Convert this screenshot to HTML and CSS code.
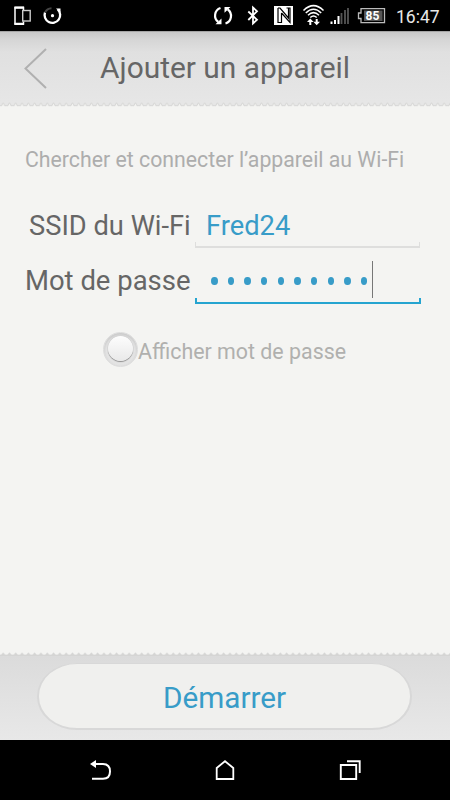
FILE: index.html
```html
<!DOCTYPE html>
<html lang="fr">
<head>
<meta charset="utf-8">
<title>Ajouter un appareil</title>
<link rel="stylesheet" href="styles.css">
</head>
<body>
<div class="status">
  <svg class="status-icons" width="390" height="31" viewBox="0 0 390 31" fill="none" stroke="#fff">
    <path d="M23.500 10V7.500H15V24H23.500V21.500" stroke-width="1.500"/>
    <path d="M14.500 7.700H24M14.500 23.800H24" stroke-width="2.200"/>
    <rect x="22.700" y="10.500" width="7.500" height="10.500" stroke="#ccc" stroke-width="1.400"/>
    <path d="M57.800 9.500A7.800 7.800 0 1 1 45 12.500" stroke-width="2.300"/>
    <path d="M45 12.500A7.800 7.800 0 0 1 51.500 8.200" stroke="#444" stroke-width="2"/>
    <path d="M56 8.500H60.500V13Z" fill="#fff" stroke="none"/>
    <circle cx="52.500" cy="15.700" r="1.600" fill="#fff" stroke="none"/>
    <path d="M220.500 8A8 8 0 0 0 218.300 22M225.500 23.500A8 8 0 0 0 227.800 9.500" stroke-width="2.200"/>
    <path d="M215.500 24.300H221.500V18.500ZM230.500 7H224.500V12.800Z" fill="#fff" stroke="none"/>
    <path d="M248.300 11.500L257 19.800L253 23.500V7.500L257 11.300L248.300 20" stroke-width="1.800"/>
    <rect x="274" y="6" width="19" height="19" fill="#fff" stroke="none"/>
    <path d="M278 8V22.500H281.500V13M278 8H280L288.500 18V8M281.500 13L290 22.500V8H286.500" stroke="#000" stroke-width="1.200"/>
    <path d="M303.500 10.500Q313.500 .8 323.500 10.500M305.800 13Q313.500 5.500 321.200 13M308 15.300Q313.500 10 319 15.300M310.300 17.500Q313.500 14.500 316.700 17.500" stroke-width="1.500"/>
    <path d="M310.300 25V21M316.700 19V22" stroke-width="2"/>
    <path d="M307 22L310.300 18.500L313.600 22ZM313.400 21.800L316.700 25.300L320 21.800Z" fill="#fff" stroke="none"/>
    <path d="M331.500 24V21.500M335 24V20M338.500 24V16" stroke-width="2"/>
    <path d="M341.500 24V13M345 24V10M348 24V8" stroke="#555" stroke-width="1.800"/>
    <path d="M361 8.700H384.500V22.700H361V18.500H358.500V13H361Z" stroke="#bbb" stroke-width="1.300"/>
    <rect x="364" y="10.500" width="18.500" height="10.500" fill="#555" stroke="none"/>
    <text class="battery" x="372.500" y="20">85</text>
  </svg>
  <span class="clock">16:47</span>
</div>
<header class="header">
  <svg class="back" width="24" height="42" viewBox="0 0 24 42" fill="none" stroke="#b0b0b0" stroke-width="2"><path d="M22 1L1.500 20.500L22 40"/></svg>
  <h1 class="title">Ajouter un appareil</h1>
</header>
<svg class="edge" width="450" height="5"><defs><pattern id="top-wave" width="6.300" height="5" patternUnits="userSpaceOnUse"><path d="M0 0H6.300V3.300Q4.700 4.800 4.100 2.300Q3.150 -.3 2.200 2.300Q1.600 4.800 0 3.300Z" fill="#e6e6e6"/><path d="M0 3.500Q1.600 4.600 2.200 2.300Q3.150 -.3 4.100 2.300Q4.700 4.600 6.300 3.500" fill="none" stroke="#d6d6d5"/></pattern></defs><rect width="450" height="5" fill="url(#top-wave)"/></svg>
<main class="content">
  <p class="intro"><span class="fit fit-intro">Chercher et connecter l’appareil au Wi-Fi</span></p>
  <div class="form">
    <div class="row">
      <label class="label"><span class="fit fit-ssid">SSID du Wi-Fi</span></label>
      <div class="field"><span class="fit fit-value">Fred24</span></div>
    </div>
    <div class="row row-password">
      <label class="label"><span class="fit fit-pass">Mot de passe</span></label>
      <div class="field active"><span class="dots"><i></i><i></i><i></i><i></i><i></i><i></i><i></i><i></i><i></i><i></i></span><span class="caret"></span></div>
    </div>
  </div>
  <div class="show"><span class="radio"><span class="knob"></span></span><span class="fit fit-show">Afficher mot de passe</span></div>
</main>
<svg class="edge" width="450" height="4"><defs><pattern id="bottom-wave" width="6.300" height="4" patternUnits="userSpaceOnUse"><path d="M0 2.500Q1.600 3 2.200 1.500Q3.150 -.5 4.100 1.500Q4.700 3 6.300 2.500V4H0Z" fill="#d5d5d4"/></pattern></defs><rect width="450" height="4" fill="url(#bottom-wave)"/></svg>
<footer class="footer"><div class="start"><span class="fit fit-start">Démarrer</span></div></footer>
<nav class="nav">
  <svg width="450" height="60" viewBox="0 0 450 60" fill="none" stroke="#fff" stroke-width="2">
    <path d="M95 24H103Q110 24 110 31.500Q110 38.700 103 38.700H92"/>
    <path d="M90 24L96 20V28Z" fill="#fff" stroke="none"/>
    <path d="M216.700 39V28L225 21.200L233.300 28V39Z" stroke-width="1.800"/>
    <path d="M340.800 25H356.200V39H340.800ZM347 21.300H359.700V33" stroke-width="1.900"/>
  </svg>
</nav>
</body>
</html>
```

FILE: styles.css
```css
* { box-sizing: border-box; }
body {
  margin: 0;
  width: 450px;
  height: 800px;
  display: flex;
  flex-direction: column;
  overflow: hidden;
  background: #f4f4f2;
  color: #666;
  font-family: Roboto, sans-serif;
}
svg { display: block; flex: none; }
.fit { display: inline-block; white-space: nowrap; transform-origin: 0 50%; }
.status { height: 31px; background: #000; display: flex; align-items: center; }
.battery { font: bold 12px Roboto, sans-serif; fill: #fff; stroke: none; text-anchor: middle; }
.clock { margin-left: 6px; padding-top: 2px; color: #e8e8e8; font-size: 17.500px; }
.header {
  height: 71px;
  display: flex;
  align-items: center;
  border-top: 1px solid #a5a5a5;
  background: linear-gradient(#c8c8c8, #d6d6d6 8px, #e0e0e0 20px, #e6e6e6);
}
.back { margin: 4px 0 0 24px; }
.title { margin: 1px 0 0 52px; font-size: 29.900px; line-height: 36px; font-weight: 400; }
.content { flex: 1; }
.intro { margin: 40px 0 0 25px; font-size: 22px; line-height: 26px; color: #adadad; }
.form { margin-top: 32px; font-size: 28px; }
.row { display: flex; height: 43px; }
.row-password { margin-top: 12px; height: 44px; }
.label { width: 195px; padding-left: 25px; line-height: 42px; }
.row:first-child .label { padding-left: 29px; }
.field {
  width: 225px;
  height: 43px;
  padding-left: 11px;
  line-height: 42px;
  color: #389cc8;
  border-bottom: 2px solid #dededd;
  background: linear-gradient(#dededd, #dededd) 0 100% / 1px 4px no-repeat, linear-gradient(#dededd, #dededd) 100% 100% / 1px 4px no-repeat;
}
.field.active {
  width: 226px;
  height: 44px;
  padding-left: 16px;
  display: flex;
  align-items: center;
  border-color: #25a4d0;
  background: linear-gradient(#25a4d0, #25a4d0) 0 100% / 2px 4px no-repeat, linear-gradient(#25a4d0, #25a4d0) 100% 100% / 2px 4px no-repeat;
}
.dots { display: flex; gap: 10.170px; margin-top: -1px; }
.dots i { width: 6.500px; height: 8px; border-radius: 50%; background: #389cc8; }
.caret { width: 1px; height: 37px; margin: -4px 0 0 4.500px; background: #777; }
.show { display: flex; align-items: center; margin: 27px 0 0 103px; height: 36px; font-size: 22px; color: #b0b0ae; }
.radio {
  width: 35px;
  height: 35px;
  display: grid;
  place-items: center;
  border-radius: 50%;
  border: 1px solid #ddd;
  background: radial-gradient(circle, #e4e4e4 60%, #d8d8d8);
  box-shadow: inset 0 2px 3px #c9c9c9;
}
.knob { width: 25px; height: 25px; margin-top: -1px; border-radius: 50%; background: linear-gradient(#fdfdfd, #e9e9e9); box-shadow: 0 1px 1px #909090, 0 0 1px #aaa; }
.footer { height: 84px; padding-top: 7px; background: linear-gradient(#dbdbdb, #e8e8e8); }
.start {
  width: 375px;
  height: 67px;
  margin-left: 37px;
  padding-left: 124px;
  border: 2px solid #d8d8d8;
  border-top-width: 1px;
  border-radius: 40px / 33px;
  background: #f0f0ee;
  color: #389cc8;
  font-size: 30px;
  line-height: 68px;
}
.nav { height: 60px; background: #000; }
.fit-intro { transform: scaleX(.967); }
.fit-ssid, .fit-value { transform: scaleX(.974); }
.fit-pass { transform: scaleX(.98); }
.fit-show { margin-top: 4px; transform: scaleX(.972); }
.fit-start { transform: scaleX(.99); }
```
